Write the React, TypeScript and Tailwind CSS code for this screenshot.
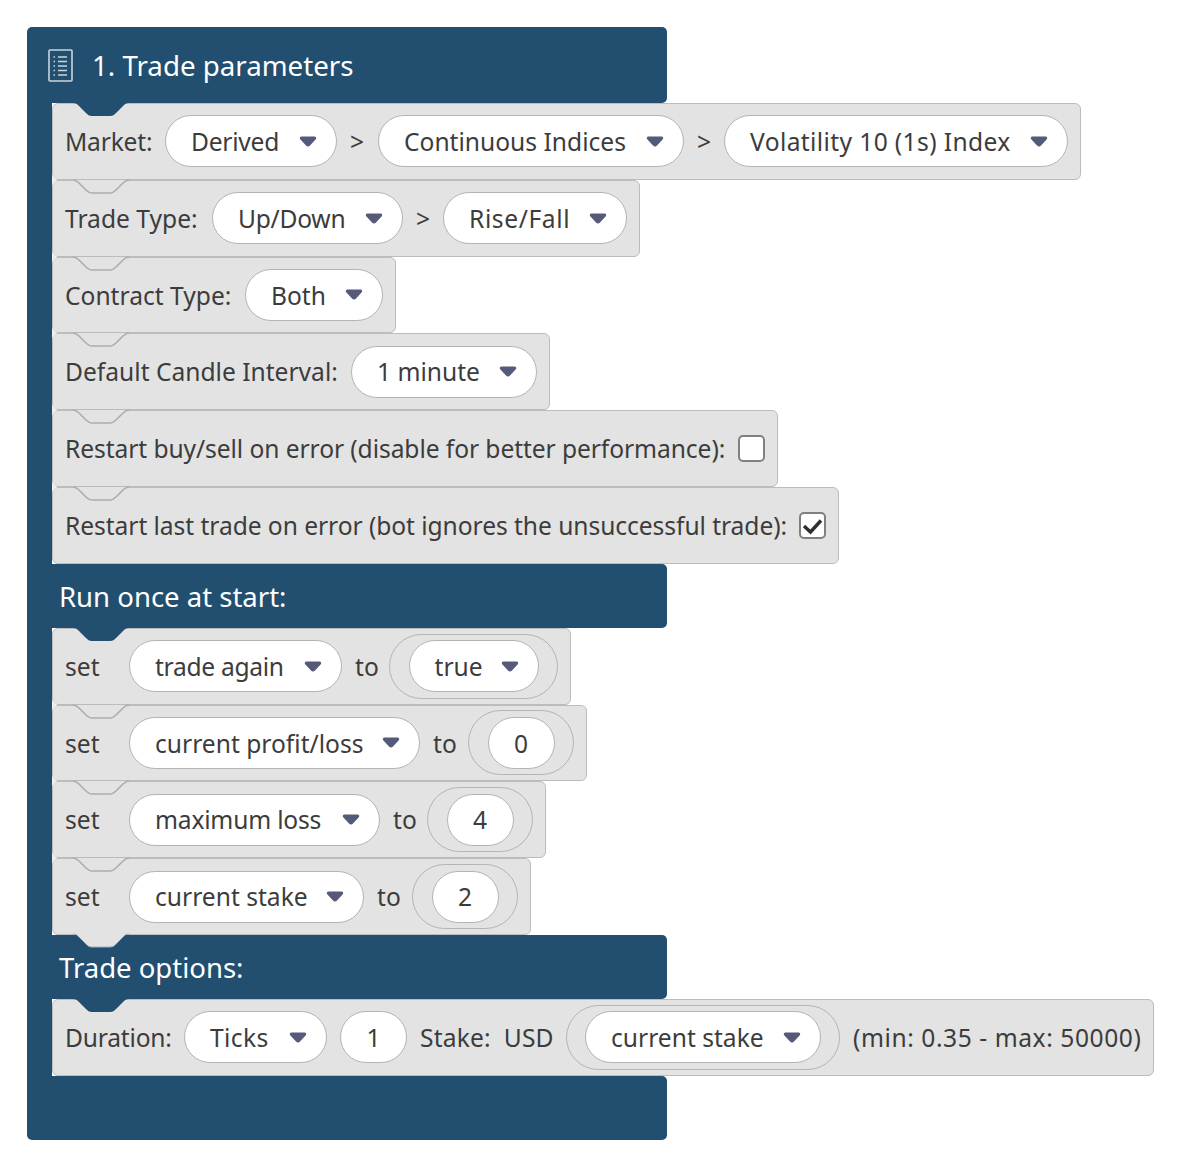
import type { ReactNode } from 'react';
import clsx from 'clsx';

function Arrow() {
  return (
    <svg width="18" height="11" viewBox="0 0 18 11" className="ml-auto shrink-0">
      <path d="M2.5 0.5H15.5C17 0.5 17.8 2 16.8 3.2L11 9.5C9.9 10.7 8.1 10.7 7 9.5L1.2 3.2C0.2 2 1 0.5 2.5 0.5Z" fill="#565a7a" />
    </svg>
  );
}

function Label({ children, className }: { children: ReactNode; className?: string }) {
  return <span className={clsx('shrink-0 pt-[2px] whitespace-nowrap', className)}>{children}</span>;
}

function Select({ label, className, labelClass }: { label: string; className: string; labelClass?: string }) {
  return (
    <div className={clsx('flex h-[52px] shrink-0 items-center rounded-[26px] border border-[#b4b4b4] bg-white pr-[19px] pl-[25px]', className)}>
      <Label className={labelClass}>{label}</Label>
      <Arrow />
    </div>
  );
}

function NumberField({ value }: { value: string }) {
  return (
    <div className="flex h-[52px] w-[67px] shrink-0 items-center justify-center rounded-[26px] border border-[#b4b4b4] bg-white">
      <Label>{value}</Label>
    </div>
  );
}

function Socket({ children, className }: { children: ReactNode; className: string }) {
  return (
    <div className={clsx('flex h-[65px] shrink-0 items-center justify-center rounded-[33px] border border-[#b4b4b4]', className)}>
      {children}
    </div>
  );
}

function Checkbox({ checked }: { checked?: boolean }) {
  return (
    <div className="flex h-[27px] w-[27px] shrink-0 items-center justify-center rounded-[5px] border-2 border-[#808080] bg-white">
      {checked && (
        <svg width="23" height="23" viewBox="0 0 23 23" fill="none" stroke="#2f2f2f" strokeWidth="3.4">
          <path d="M3 12L9.5 18L20 6.5" />
        </svg>
      )}
    </div>
  );
}

const NOTCH = 'M21 0C24 0 25 1 27 3L34 10C36 12 37 13 40 13H58C61 13 62 12 64 10L71 3C73 1 74 0 77 0';

function Block({
  children,
  first,
  tab,
}: {
  children: ReactNode;
  first?: boolean;
  tab?: boolean;
}) {
  return (
    <div className="relative flex h-[76.8px] w-fit items-center gap-[13px] rounded-[6px] border border-[#bcbcbc] bg-[#e3e3e3] pr-[12px] pl-[12px]">
      <svg width="78" height="16" viewBox="0 -1 78 16" className="absolute top-[-2px] left-[-1px] overflow-visible">
        <path d={NOTCH + 'Z'} fill={first ? '#224f6f' : '#e3e3e3'} />
        {!first && <path d={NOTCH} fill="none" stroke="#adadad" strokeWidth="1.6" />}
        {!first && <path d="M0 -5L5 0L0 5Z" fill="#eeeeee" />}
      </svg>
      {tab && (
        <svg width="78" height="16" viewBox="0 -1 78 16" className="absolute top-[calc(100%-1px)] left-[-1px] z-10">
          <path d={NOTCH + 'Z'} fill="#e3e3e3" />
          <path d={NOTCH} fill="none" stroke="#9fb0bc" strokeWidth="1" />
        </svg>
      )}
      {children}
    </div>
  );
}

function Stack({ children }: { children: ReactNode }) {
  return <div className="flex w-fit flex-col border-l-[25px] border-[#224f6f]">{children}</div>;
}

function SectionTitle({ title }: { title: string }) {
  return (
    <div className="flex h-[64px] w-[640px] items-center rounded-r-[5px] bg-[#224f6f] pt-[1px] pl-[32px] text-[27.5px] text-white">
      {title}
    </div>
  );
}

export default function App() {
  return (
    <div className="min-h-[1168px] bg-white pt-[27px] pl-[27px] font-['Noto_Sans',sans-serif] text-[24.6px] text-[#3c3c3c]">
      <div className="flex h-[76px] w-[640px] items-center gap-[19px] rounded-t-[5px] rounded-br-[5px] bg-[#224f6f] pl-[21px] text-[27.7px] text-white">
        <svg width="25" height="33" viewBox="0 0 25 33" fill="none" stroke="#c9d5de" strokeWidth="1.6">
          <rect x="1" y="1" width="23" height="31" rx="1" />
          <path d="M10 8H19M10 12.5H19M10 17H19M10 21.5H19M10 26H19" />
          <path d="M5.5 8H7M5.5 12.5H7M5.5 17H7M5.5 21.5H7M5.5 26H7" />
        </svg>
        <span className="pt-[1px]">1. Trade parameters</span>
      </div>

      <Stack>
        <Block first>
          <Label className="w-[87px] tracking-[-0.2px]">Market:</Label>
          <Select label="Derived" className="w-[172px]" labelClass="tracking-[-0.25px]" />
          <Label className="w-[15px]">&gt;</Label>
          <Select label="Continuous Indices" className="w-[306px]" />
          <Label className="w-[14px]">&gt;</Label>
          <Select label="Volatility 10 (1s) Index" className="w-[344px]" labelClass="tracking-[0.38px]" />
        </Block>
        <Block>
          <Label className="w-[134px]">Trade Type:</Label>
          <Select label="Up/Down" className="w-[191px]" labelClass="tracking-[-0.25px]" />
          <Label className="w-[14px]">&gt;</Label>
          <Select label="Rise/Fall" className="w-[184px]" labelClass="tracking-[0.6px]" />
        </Block>
        <Block>
          <Label className="w-[167px]">Contract Type:</Label>
          <Select label="Both" className="w-[138px]" />
        </Block>
        <Block>
          <Label className="w-[273px]">Default Candle Interval:</Label>
          <Select label="1 minute" className="w-[186px]" />
        </Block>
        <Block>
          <Label className="w-[660px] tracking-[-0.08px]">Restart buy/sell on error (disable for better performance):</Label>
          <Checkbox />
        </Block>
        <Block>
          <Label className="w-[721px] tracking-[-0.06px]">Restart last trade on error (bot ignores the unsuccessful trade):</Label>
          <Checkbox checked />
        </Block>
      </Stack>

      <SectionTitle title="Run once at start:" />

      <Stack>
        <Block first>
          <Label className="w-[51px]">set</Label>
          <Select label="trade again" className="w-[213px]" labelClass="tracking-[-0.3px]" />
          <Label className="w-[21px]">to</Label>
          <Socket className="w-[169px]">
            <Select label="true" className="w-[130px]" />
          </Socket>
        </Block>
        <Block>
          <Label className="w-[51px]">set</Label>
          <Select label="current profit/loss" className="w-[291px]" />
          <Label className="w-[22px]">to</Label>
          <Socket className="w-[106px]">
            <NumberField value="0" />
          </Socket>
        </Block>
        <Block>
          <Label className="w-[51px]">set</Label>
          <Select label="maximum loss" className="w-[251px]" labelClass="tracking-[-0.2px]" />
          <Label className="w-[21px]">to</Label>
          <Socket className="w-[106px]">
            <NumberField value="4" />
          </Socket>
        </Block>
        <Block tab>
          <Label className="w-[51px]">set</Label>
          <Select label="current stake" className="w-[235px]" />
          <Label className="w-[22px]">to</Label>
          <Socket className="w-[106px]">
            <NumberField value="2" />
          </Socket>
        </Block>
      </Stack>

      <SectionTitle title="Trade options:" />

      <Stack>
        <Block first>
          <Label className="w-[106px] tracking-[-0.2px]">Duration:</Label>
          <Select label="Ticks" className="w-[143px]" labelClass="tracking-[0.4px]" />
          <NumberField value="1" />
          <Label className="w-[133px] tracking-[0.15px]">Stake:&nbsp; USD</Label>
          <Socket className="w-[274px]">
            <Select label="current stake" className="w-[236px]" />
          </Socket>
          <Label className="w-[288px] tracking-[0.56px]">(min: 0.35 - max: 50000)</Label>
        </Block>
      </Stack>

      <div className="h-[64px] w-[640px] rounded-b-[5px] rounded-tr-[5px] bg-[#224f6f]" />
    </div>
  );
}
